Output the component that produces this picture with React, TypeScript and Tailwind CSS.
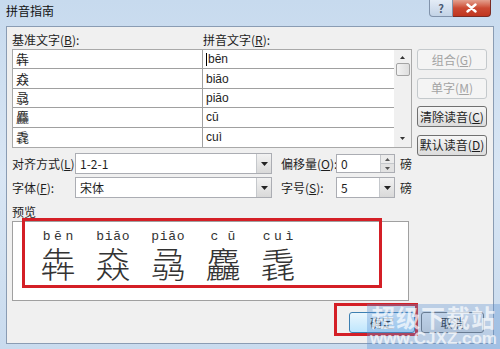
const ui = "font-['Noto_Sans_CJK_SC',sans-serif] text-[12px] leading-[14px] text-[#1e1e1e]"

const rows = [
  { base: '犇', py: 'bēn' },
  { base: '猋', py: 'biāo' },
  { base: '骉', py: 'piāo' },
  { base: '麤', py: 'cū' },
  { base: '毳', py: 'cuì' },
]

function Label({ text, k }: { text: string; k: string }) {
  return (
    <span className="whitespace-nowrap">
      {text}(<span className="underline">{k}</span>):
    </span>
  )
}

function Btn({ text, k, disabled }: { text: string; k?: string; disabled?: boolean }) {
  return (
    <div
      className={
        'flex h-[21px] w-[70px] items-center justify-center whitespace-nowrap rounded-[3px] border ' +
        (disabled
          ? 'border-[#c4c9cc] bg-[#f4f4f4] text-[#a3a3a3]'
          : 'border-[#707070] bg-gradient-to-b from-[#f6f6f6] to-[#dcdcdc] text-[#1e1e1e]')
      }
    >
      {text}
      {k && (
        <>
          (<span className="underline">{k}</span>)
        </>
      )}
    </div>
  )
}

function DownArrow() {
  return (
    <svg width="7" height="4" viewBox="0 0 7 4">
      <path d="M0 0h7L3.5 4z" fill="#222" />
    </svg>
  )
}

function Combo({ value, w }: { value: string; w: string }) {
  return (
    <div className={`flex h-[21px] ${w} items-stretch border border-[#abadb3] bg-white`}>
      <div className="flex flex-1 items-center pl-[4px]">{value}</div>
      <div className="flex w-[15px] items-center justify-center border-l border-[#c5c8cc] bg-gradient-to-b from-[#f2f2f2] to-[#d9d9d9]">
        <DownArrow />
      </div>
    </div>
  )
}

export default function App() {
  return (
    <div className={`relative h-[349px] w-[500px] overflow-hidden bg-gradient-to-b from-[#c7daee] via-[#d9e6f4] to-[#c9dbee] ${ui}`}>
      {/* title bar */}
      <div className="flex h-[26px] items-start justify-between">
        <div className="pl-[6px] pt-[4px] text-[12px] text-[#111]">拼音指南</div>
        <div className="mr-[9px] flex">
          <div className="flex h-[17px] w-[24px] items-center justify-center rounded-bl-[4px] border border-t-0 border-[#8193ab] bg-gradient-to-b from-[#e4ecf6] to-[#c3d3e6] text-[11px] font-bold text-[#4a5a72]">
            ?
          </div>
          <div className="flex h-[17px] w-[38px] items-center justify-center rounded-br-[4px] border border-l-0 border-t-0 border-[#7a2b24] bg-gradient-to-b from-[#e3a08f] via-[#cb4a33] to-[#c0351f]">
            <svg width="11" height="10" viewBox="0 0 11 10">
              <path d="M1.5 1.5l8 7M9.5 1.5l-8 7" stroke="#fff" strokeWidth="2.4" strokeLinecap="round" />
            </svg>
          </div>
        </div>
      </div>

      {/* client area */}
      <div className="mx-[6px] h-[318px] border border-[#8a9cb3] bg-[#f0f0f0] px-[5px] pt-[6px]">
        <div className="flex h-[115px] items-start gap-[5px]">
          <div className="w-[400px]">
            <div className="flex h-[16px]">
              <div className="w-[191px]">
                <Label text="基准文字" k="B" />
              </div>
              <Label text="拼音文字" k="R" />
            </div>
            <div className="flex border border-[#a9a9a9] bg-white">
              <div className="w-[381px]">
                {rows.map((r, i) => (
                  <div key={r.base} className={'flex h-[19.4px] ' + (i < 4 ? 'border-b border-[#a0a0a0]' : '')}>
                    <div className="flex w-[190px] items-center border-r border-[#a0a0a0] pl-[3px] text-[13px]">{r.base}</div>
                    <div className="flex flex-1 items-center pl-[3px] font-['Liberation_Sans',sans-serif] text-[12px]">
                      {i === 0 && <span className="mr-[1px] h-[13px] w-px bg-black" />}
                      {r.py}
                    </div>
                  </div>
                ))}
              </div>
              <div className="flex w-[17px] flex-col items-center bg-[#f0f0f0]">
                <svg className="mt-[6px]" width="5" height="3" viewBox="0 0 5 3">
                  <path d="M0 3h5L2.5 0z" fill="#333" />
                </svg>
                <div className="mt-[4px] h-[13px] w-[14px] rounded-[2px] border border-[#a4a4a4] bg-gradient-to-r from-[#f3f3f3] to-[#dedede]" />
                <div className="flex-1" />
                <svg className="mb-[7px]" width="5" height="3" viewBox="0 0 5 3">
                  <path d="M0 0h5L2.5 3z" fill="#333" />
                </svg>
              </div>
            </div>
          </div>
          <div className="flex flex-col gap-[7.5px] pt-[16px]">
            <Btn text="组合" k="G" disabled />
            <Btn text="单字" k="M" disabled />
            <Btn text="清除读音" k="C" />
            <Btn text="默认读音" k="D" />
          </div>
        </div>

        <div className="mt-[5px] flex h-[21px] items-center">
          <div className="w-[63px]">
            <Label text="对齐方式" k="L" />
          </div>
          <Combo value="1-2-1" w="w-[197px]" />
          <div className="ml-[9px] w-[55px]">
            <Label text="偏移量" k="O" />
          </div>
          <div className="flex h-[19px] w-[59px] items-stretch border border-[#abadb3] bg-white">
            <div className="flex flex-1 items-center pl-[4px]">0</div>
            <div className="flex w-[14px] flex-col border-l border-[#c5c8cc]">
              <div className="flex flex-1 items-center justify-center border-b border-[#c5c8cc] bg-[#ececec]">
                <svg width="5" height="3" viewBox="0 0 5 3">
                  <path d="M0 3h5L2.5 0z" fill="#555" />
                </svg>
              </div>
              <div className="flex flex-1 items-center justify-center bg-[#e2e2e2]">
                <svg width="5" height="3" viewBox="0 0 5 3">
                  <path d="M0 0h5L2.5 3z" fill="#555" />
                </svg>
              </div>
            </div>
          </div>
          <div className="ml-[5px]">磅</div>
        </div>

        <div className="mt-[3px] flex h-[21px] items-center">
          <div className="w-[63px]">
            <Label text="字体" k="F" />
          </div>
          <Combo value="宋体" w="w-[197px]" />
          <div className="ml-[9px] w-[55px]">
            <Label text="字号" k="S" />
          </div>
          <Combo value="5" w="w-[59px]" />
          <div className="ml-[5px]">磅</div>
        </div>

        <div className="mt-[7px] h-[16px]">预览</div>
        <div className="relative h-[80px] w-[397px] border border-[#a0a0a0] bg-white">
          <div className="flex gap-[21px] pl-[28px] pt-[8px] text-[#333]">
            {rows.map((r) => (
              <div key={r.base} className="flex w-[34px] flex-col items-center">
                <div className="flex w-full justify-around font-['Liberation_Mono',monospace] text-[13px] leading-[14px]">
                  {r.py.split('').map((c, j) => (
                    <span key={j}>{c}</span>
                  ))}
                </div>
                <div className="text-[35px] leading-[37px] font-light">{r.base}</div>
              </div>
            ))}
          </div>
          {/* red annotation */}
          <div className="absolute left-[9px] top-[-4px] h-[70px] w-[360px] border-[3px] border-[#d41f26]" />
        </div>

        <div className="mt-[11px] flex justify-end gap-[6px] pr-[4px]">
          <div className="relative">
            <div className="flex h-[21px] w-[66px] items-center justify-center rounded-[3px] border border-[#3c7fb1] bg-gradient-to-b from-[#eaf6fd] to-[#bee6fd]">
              确定
            </div>
            <div className="absolute left-[-15px] top-[-9px] h-[33px] w-[84px] border-[3px] border-[#d41f26]" />
          </div>
          <div className="flex h-[21px] w-[63px] items-center justify-center rounded-[3px] border border-[#707070] bg-gradient-to-b from-[#f6f6f6] to-[#dcdcdc]">
            取消
          </div>
        </div>
      </div>

      {/* watermark */}
      <div className="absolute left-[367px] top-[304px] flex h-[45px] w-[133px] flex-col items-center bg-[#5a8fd0]/35 font-bold text-white/70">
        <div className="text-[24px] leading-[26px] tracking-[1px]">超级下载站</div>
        <div className="font-['Liberation_Sans',sans-serif] text-[17px] leading-[18px]">www.CJXZ.com</div>
      </div>
    </div>
  )
}
